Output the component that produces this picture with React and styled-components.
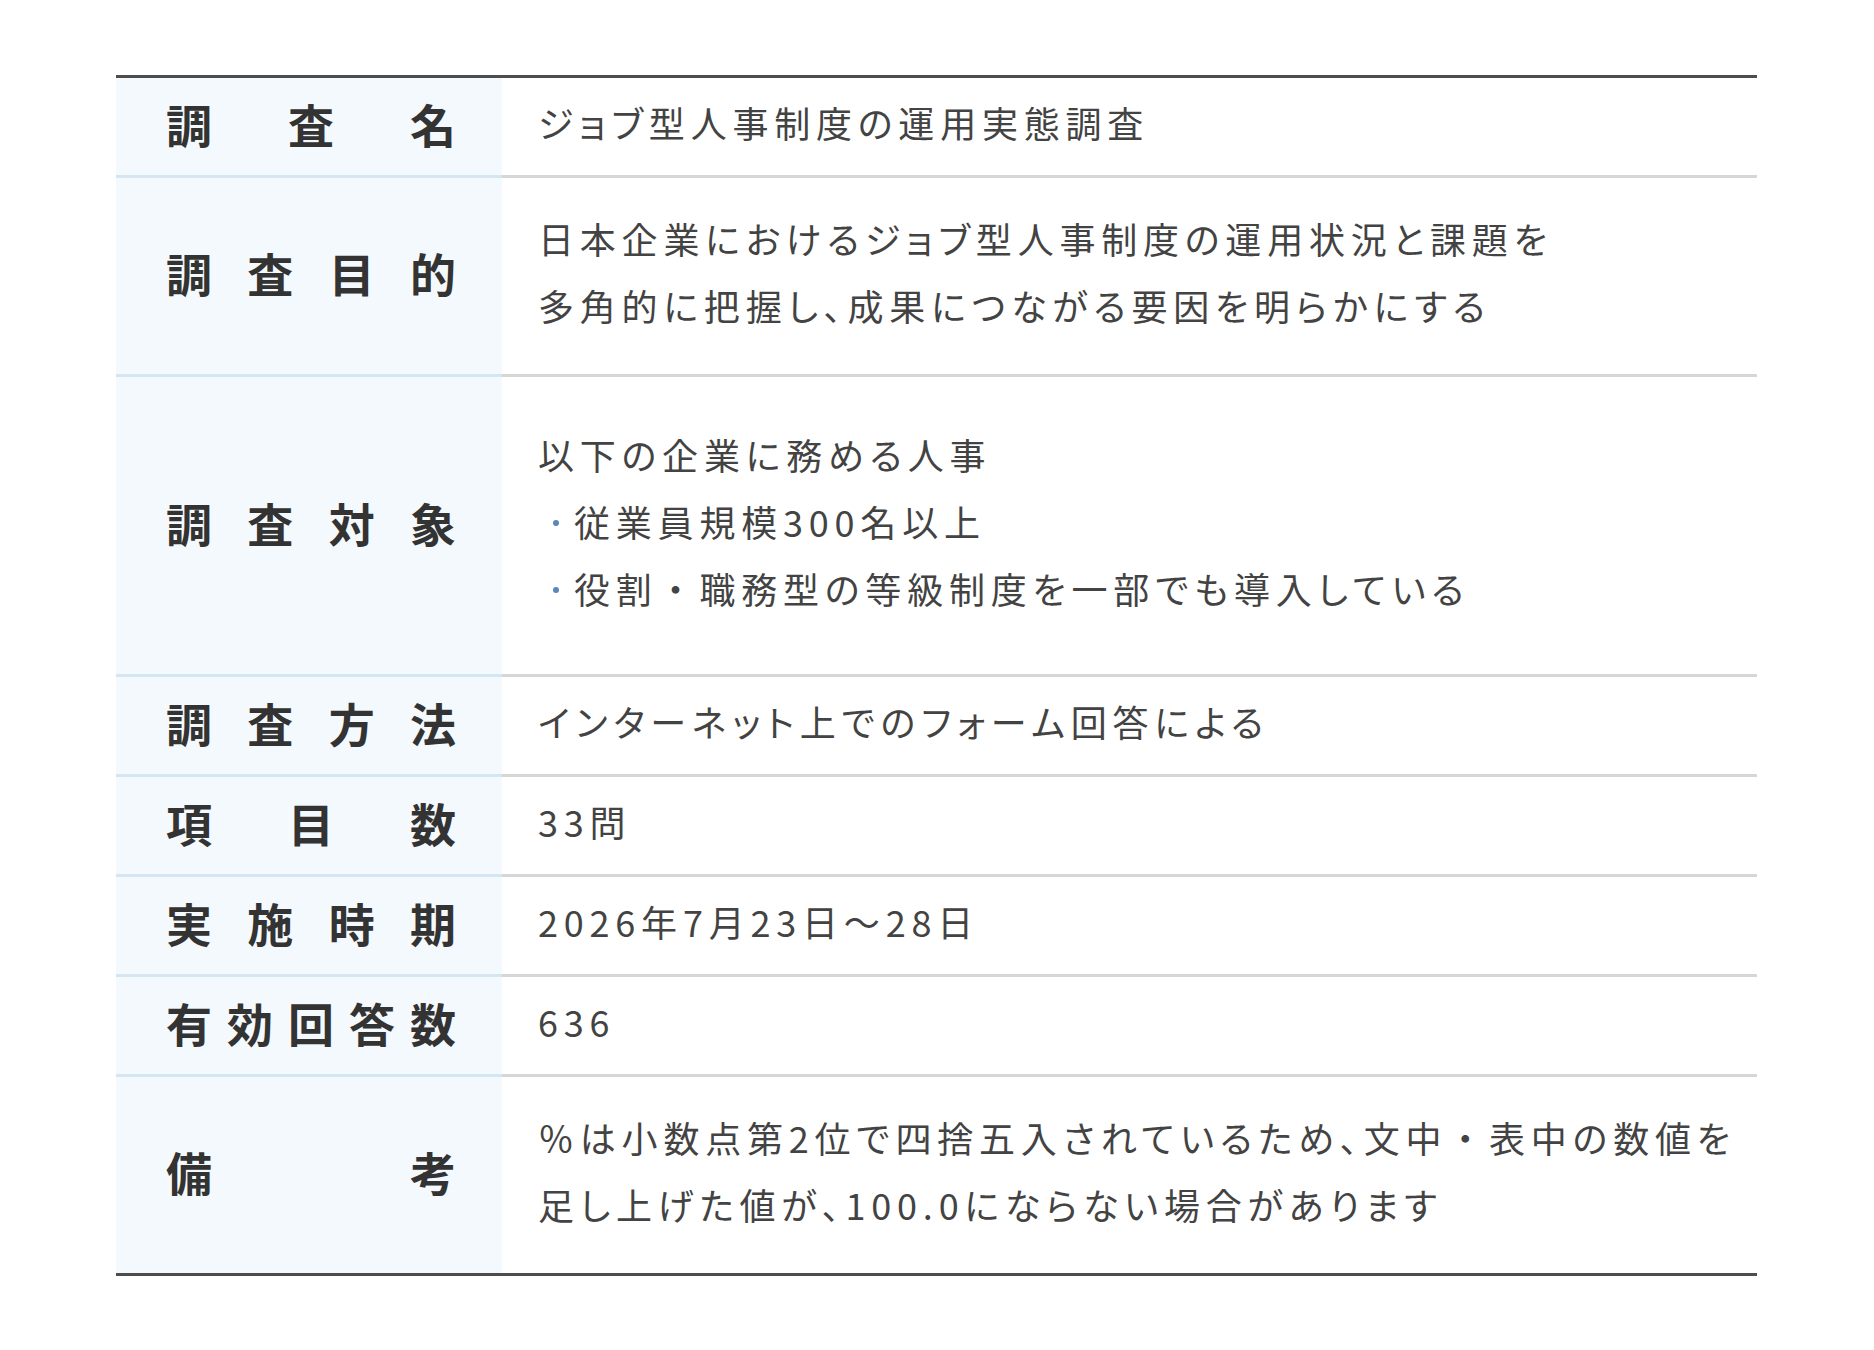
import React from "react";
import styled, { createGlobalStyle } from "styled-components";

const Global = createGlobalStyle`
  html, body { margin: 0; padding: 0; background: #ffffff; }
  body { font-family: "Noto Sans CJK JP", "Noto Sans", sans-serif; }
`;

const Page = styled.div`
  padding: 75px 117px 0 116px;
`;

const Table = styled.div`
  width: 1641px;
  border-top: 3px solid #4d4d4d;
  border-bottom: 3px solid #4d4d4d;
  display: flex;
  flex-direction: column;
`;

const Row = styled.div`
  display: grid;
  grid-template-columns: 386px 1fr;
`;

const Label = styled.div`
  background: #f3f9fd;
  border-bottom: ${(p) => (p.$last ? "none" : "3px solid #d3e6f1")};
  display: flex;
  align-items: center;
  justify-content: space-between;
  padding: 0 46px 8px 50px;
  font-size: 46px;
  font-weight: 700;
  color: #333333;
  line-height: 1;
`;

const Char = styled.span`
  display: block;
`;

const Value = styled.div`
  border-bottom: ${(p) => (p.$last ? "none" : "3px solid #d6d6d6")};
  padding: ${(p) => p.$pad - 4}px 20px ${(p) => p.$pad + 4}px 36px;
  font-size: 36px;
  line-height: 67px;
  letter-spacing: 5.8px;
  font-feature-settings: "palt";
  color: #434343;
  white-space: nowrap;
  display: flex;
  flex-direction: column;
  justify-content: center;
`;

const Mid = styled.span`
  font-feature-settings: normal;
`;

const Line = styled.div`
  position: relative;
  padding-left: ${(p) => (p.$bullet ? "36px" : "0")};

  &::before {
    content: "";
    display: ${(p) => (p.$bullet ? "block" : "none")};
    position: absolute;
    left: 15px;
    top: 32px;
    width: 6px;
    height: 6px;
    border-radius: 50%;
    background: #5b86ba;
  }
`;

const rows = [
  { label: "調査名", pad: 15, lines: [{ t: "ジョブ型人事制度の運用実態調査" }] },
  {
    label: "調査目的",
    pad: 31,
    lines: [
      { t: "日本企業におけるジョブ型人事制度の運用状況と課題を" },
      { t: "多角的に把握し、成果につながる要因を明らかにする" },
    ],
  },
  {
    label: "調査対象",
    pad: 48,
    lines: [
      { t: "以下の企業に務める人事" },
      { t: "従業員規模300名以上", b: true },
      { t: "役割・職務型の等級制度を一部でも導入している", b: true },
    ],
  },
  { label: "調査方法", pad: 15, lines: [{ t: "インターネット上でのフォーム回答による" }] },
  { label: "項目数", pad: 15, lines: [{ t: "33問" }] },
  { label: "実施時期", pad: 15, lines: [{ t: "2026年7月23日〜28日" }] },
  { label: "有効回答数", pad: 15, lines: [{ t: "636" }] },
  {
    label: "備考",
    pad: 31,
    lines: [
      { t: "％は小数点第2位で四捨五入されているため、文中・表中の数値を" },
      { t: "足し上げた値が、100.0にならない場合があります" },
    ],
  },
];

const renderText = (t) =>
  t.split("・").flatMap((part, k) =>
    k === 0 ? [part] : [<Mid key={k}>・</Mid>, part]
  );

export default function App() {
  return (
    <>
      <Global />
      <Page>
        <Table>
          {rows.map((r, i) => {
            const last = i === rows.length - 1;
            return (
              <Row key={r.label}>
                <Label $last={last}>
                  {Array.from(r.label).map((c, j) => (
                    <Char key={j}>{c}</Char>
                  ))}
                </Label>
                <Value $last={last} $pad={r.pad}>
                  {r.lines.map((l, j) => (
                    <Line key={j} $bullet={l.b}>
                      {renderText(l.t)}
                    </Line>
                  ))}
                </Value>
              </Row>
            );
          })}
        </Table>
      </Page>
    </>
  );
}
